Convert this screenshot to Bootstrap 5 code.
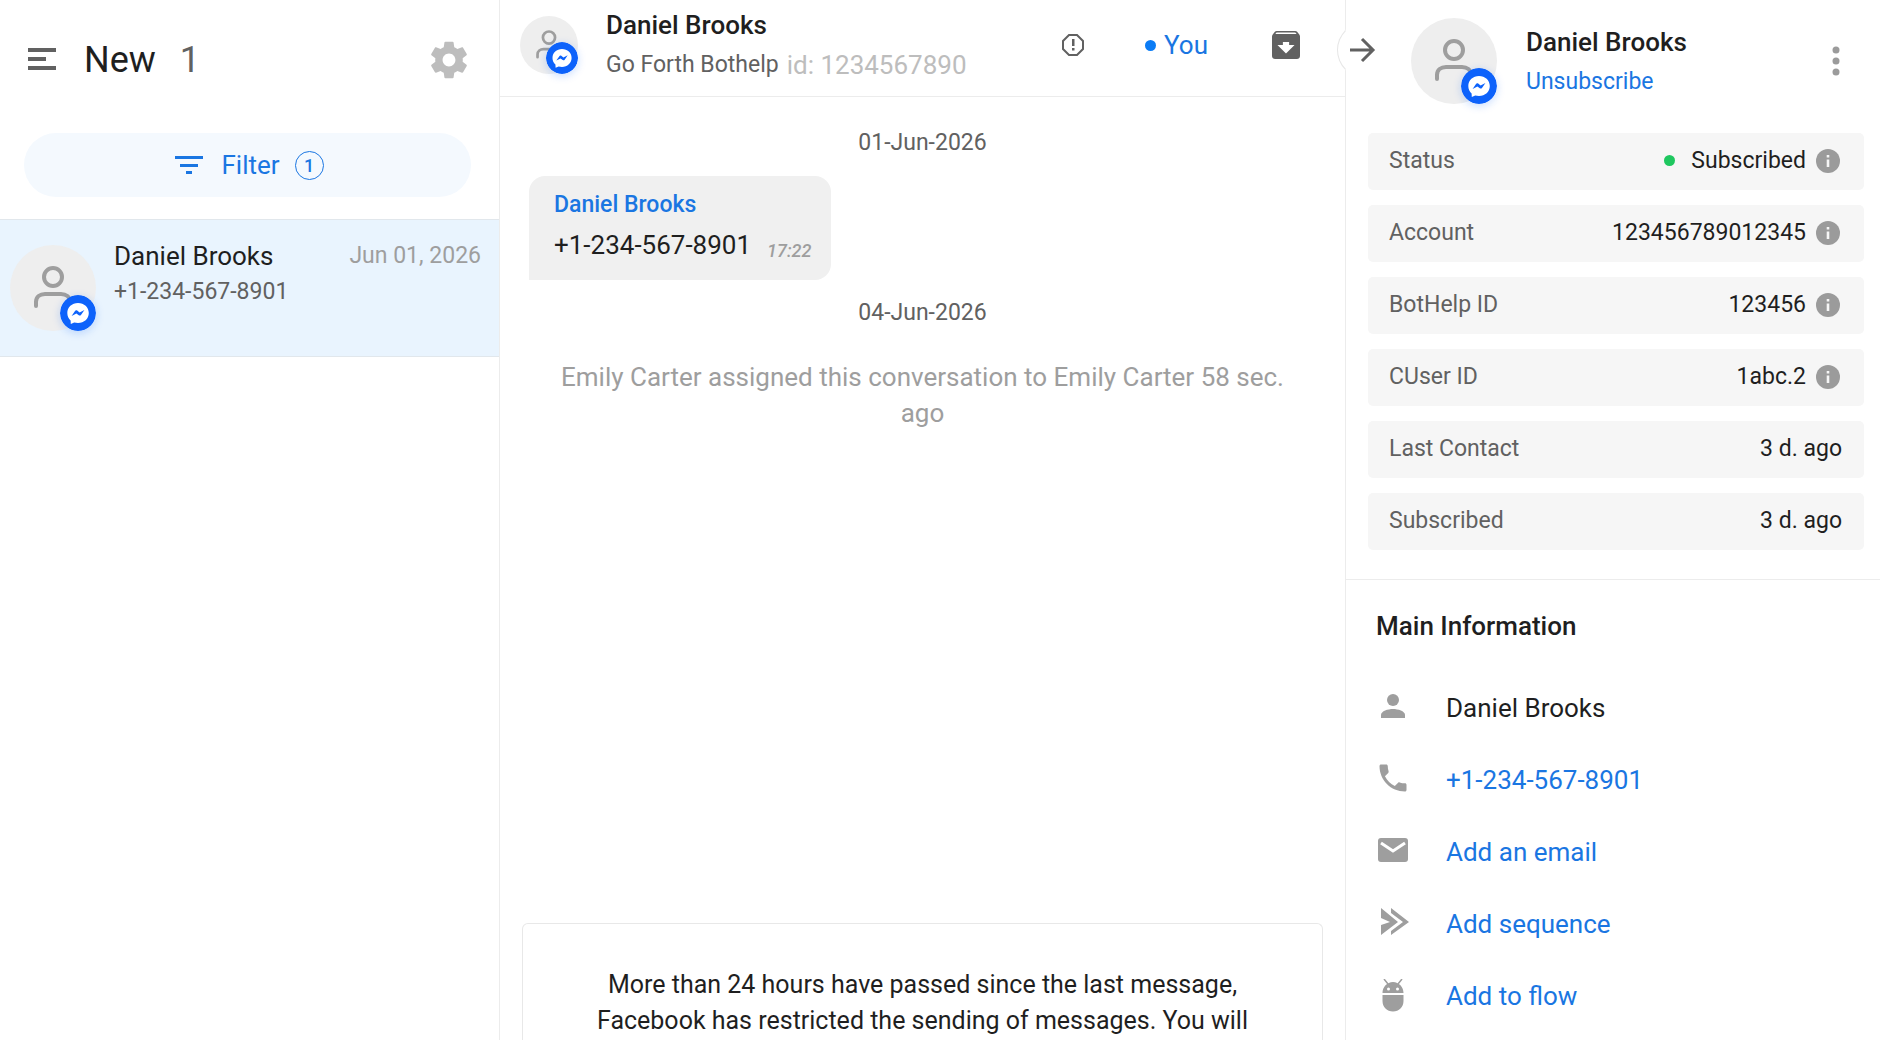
<!DOCTYPE html>
<html lang="en">
<head>
<meta charset="utf-8">
<meta name="viewport" content="width=device-width, initial-scale=1">
<title>Inbox – Daniel Brooks</title>
<link href="https://cdn.jsdelivr.net/npm/bootstrap@5.3.0/dist/css/bootstrap.min.css" rel="stylesheet">
<style>
  :root { --ink:#1f1f1f; --ink-2:#616161; --ink-3:#9e9e9e; --line:#ececec; --blue:#1a76e2; }
  body { font-family: Roboto, "Liberation Sans", sans-serif; font-size: 26px; line-height: 36px; color: var(--ink); background: #fff; }
  a { color: var(--blue); text-decoration: none; }
  .inbox { display: grid; grid-template-columns: 500fr 846fr 534fr; height: 100vh; overflow: hidden; }
  .inbox > * { min-width: 0; }
  .pane-line { border-right: 1px solid var(--line); }
  .btn-plain { background: none; border: 0; padding: 0; color: inherit; display: inline-flex; line-height: inherit; font-size: inherit; }
  .t-sm { font-size: 23px; line-height: 28px; }
  .c-2 { color: var(--ink-2); } .c-3 { color: var(--ink-3); } .c-4 { color: #bdbdbd; } .c-blue { color: var(--blue); }
  .fw-m { font-weight: 500; }
  svg { display: block; flex: none; }

  .face { position: relative; flex: none; width: 86px; height: 86px; border-radius: 50%; background: #eee; }
  .face .person { width: 100%; height: 100%; }
  .face .msgr { position: absolute; right: 0; bottom: 0; width: 36px; height: 36px; border-radius: 50%; box-shadow: 0 2px 8px rgba(13,98,251,.22); }
  .face-sm { width: 58px; height: 58px; }
  .face-sm .msgr { width: 32px; height: 32px; }
  .dot { width: 11px; height: 11px; border-radius: 50%; background: #0b7cf5; }
  .dot-on { background: #1fc75f; }

  .side-head { height: 120px; padding: 0 32px 0 28px; }
  .side-title { font-size: 36px; line-height: 44px; font-weight: 400; }
  .filter-btn { height: 64px; margin: 13px 28px 22px 24px; padding: 0 0 0 4px; border-radius: 32px; background: #f4f9fe; color: var(--blue); border: 0; }
  .filter-btn .label-text { margin: 0 15px 0 18px; }
  .filter-btn .count { width: 29px; height: 29px; border: 1px solid var(--blue); border-radius: 50%; font-size: 18px; line-height: 27px; font-weight: 500; }
  .chat-row { height: 138px; border-top: 1px solid #e1e7ec; border-bottom: 1px solid #e1e7ec; background: #e9f4fe; padding: 18px 18px 0 10px; color: inherit; gap: 18px; }
  .chat-row .face { margin-top: 7px; }

  .chat-head { height: 97px; border-bottom: 1px solid var(--line); padding: 0 45px 6px 20px; }
  .owner-btn { margin: 0 64px 0 60px; }
  .gap-top { padding-top: 19px; }
  .bubble { background: #f0f0f0; border-radius: 16px 16px 16px 0; padding: 15px 20px 17px 25px; margin-left: 29px; }
  .stamp { font-size: 18px; line-height: 24px; font-style: italic; font-weight: 500; color: var(--ink-3); }
  .notice { height: 117px; margin: 0 22px; padding: 43px 60px 0; border: 1px solid #e8e8e8; border-bottom: 0; border-radius: 6px 6px 0 0; font-size: 25px; }

  .info-pane { position: relative; }
  .fold-btn { position: absolute; left: -9px; top: 22px; width: 56px; height: 56px; border-radius: 50%; background: #fff; border: 1px solid transparent; border-left-color: #e6e6e6; padding: 0 0 0 10px; }
  .who { height: 133px; padding: 18px 34px 0 65px; gap: 29px; }
  .who-text { padding-top: 6px; }
  .facts { padding: 0 16px 29px 22px; gap: 15px; border-bottom: 1px solid var(--line); }
  .facts > div { height: 57px; background: #f6f6f6; border-radius: 5px; padding: 0 22px 2px 21px; }
  .facts dt { font-weight: 400; }
  .more { padding: 28px 30px 0 30px; }
  .more h2 { font-size: 26px; line-height: 36px; }
  .more li { height: 72px; gap: 36px; }
</style>
<script src="https://cdn.jsdelivr.net/npm/bootstrap@5.3.0/dist/js/bootstrap.bundle.min.js" defer></script>
</head>
<body>
<svg width="0" height="0" class="position-absolute" aria-hidden="true">
  <symbol id="person" viewBox="0 0 86 86"><g fill="none" stroke="#9e9e9e" stroke-width="4" stroke-linecap="round"><circle cx="43" cy="32" r="9"/><path d="M26 61v-4c0-5 4-8 9-8h16c5 0 9 3 9 8v4"/></g></symbol>
  <symbol id="msgr" viewBox="0 0 36 36"><circle cx="18" cy="18" r="18" fill="#0d62fb"/><path fill="#fff" d="M18 8C12 8 7.300 12.300 7.300 18c0 3 1.300 5.600 3.300 7.400l.2 3.600 3.400-1.500c1.200.3 2.500.5 3.800.5 6.100 0 10.800-4.300 10.800-10S24.100 8 18 8z"/><path fill="#0d62fb" d="M11.600 20.900l3.400-4.900c.5-.8 1.500-.9 2.200-.4l2.400 1.800 4.800-2.500-3.400 5c-.5.7-1.500.9-2.200.4l-2.400-1.800z"/></symbol>
  <symbol id="info" viewBox="0 0 24 24"><circle cx="12" cy="12" r="12" fill="#9b9b9b"/><path fill="#f6f6f6" d="M10.700 6h2.600v2.600h-2.600zM10.700 10.400h2.600v7.600h-2.600z"/></symbol>
</svg>

<div class="inbox">
  <aside class="pane-line">
    <header class="side-head d-flex align-items-center justify-content-between">
      <div class="d-flex align-items-center">
        <button class="btn-plain" type="button" aria-label="Menu"><svg width="28" height="24" viewBox="0 0 28 24" fill="#616161"><path d="M0 0h28v4H0zM0 9h18v4H0zM0 18h28v4H0z"/></svg></button>
        <h1 class="side-title mb-0 ms-4 ps-1">New</h1>
        <span class="side-title c-2 ms-4">1</span>
      </div>
      <button class="btn-plain" type="button" aria-label="Settings"><svg width="36" height="38" viewBox="2.200 2 19.600 20" fill="#bdbdbd"><path d="M19.430 12.980c.04-.32.070-.64.070-.98s-.03-.66-.07-.98l2.110-1.650c.19-.15.240-.42.120-.64l-2-3.460c-.12-.22-.39-.3-.61-.22l-2.490 1c-.52-.4-1.080-.73-1.690-.98l-.38-2.650C14.460 2.180 14.250 2 14 2h-4c-.25 0-.46.180-.49.420l-.38 2.650c-.61.250-1.170.590-1.690.980l-2.490-1c-.23-.09-.49 0-.61.220l-2 3.460c-.13.220-.07.490.120.640l2.110 1.650c-.04.320-.07.650-.07.980s.030.660.070.980l-2.110 1.650c-.19.150-.24.420-.12.640l2 3.460c.12.220.390.300.610.220l2.490-1c.52.400 1.080.730 1.690.980l.38 2.650c.03.240.240.420.490.420h4c.25 0 .46-.18.490-.42l.38-2.650c.61-.25 1.170-.59 1.690-.98l2.490 1c.23.090.490 0 .610-.22l2-3.460c.12-.22.070-.49-.12-.64l-2.110-1.650zM12 15.500c-1.930 0-3.500-1.570-3.500-3.500s1.570-3.500 3.500-3.500 3.500 1.570 3.500 3.500-1.570 3.500-3.500 3.500z"/></svg></button>
    </header>
    <div class="d-flex">
      <button class="filter-btn flex-grow-1 d-flex align-items-center justify-content-center" type="button">
        <svg width="28" height="20" viewBox="0 0 28 20" fill="#1a76e2"><path d="M0 1h28v3H0zM5 9h18v3H5zM11 16h6v3h-6z"/></svg>
        <span class="label-text">Filter</span>
        <span class="count">1</span>
      </button>
    </div>
    <a href="#chat" class="chat-row d-flex align-items-start">
      <span class="face"><svg class="person"><use href="#person"/></svg><svg class="msgr"><use href="#msgr"/></svg></span>
      <span class="flex-grow-1">
        <span class="d-flex justify-content-between align-items-center"><span>Daniel Brooks</span><span class="t-sm c-3">Jun 01, 2026</span></span>
        <span class="d-block t-sm c-2 pt-1">+1-234-567-8901</span>
      </span>
    </a>
  </aside>

  <main class="d-flex flex-column pane-line" id="chat">
    <header class="chat-head d-flex align-items-center">
      <span class="face face-sm"><svg class="person"><use href="#person"/></svg><svg class="msgr"><use href="#msgr"/></svg></span>
      <div class="flex-grow-1 ms-4 ps-1">
        <div class="fw-m">Daniel Brooks</div>
        <div class="d-flex align-items-center gap-2 pt-1"><span class="t-sm c-2">Go Forth Bothelp</span><span class="c-4">id: 1234567890</span></div>
      </div>
      <div class="d-flex align-items-center">
        <button class="btn-plain" type="button" aria-label="Report"><svg width="24" height="24" viewBox="0 0 24 24"><path fill="none" stroke="#616161" stroke-width="2" d="M8 2h8l6 6v8l-6 6H8l-6-6V8z"/><path fill="#616161" d="M11 6h2.500v7H11zM11 15h2.500v2.500H11z"/></svg></button>
        <button class="btn-plain owner-btn align-items-center gap-2 c-blue" type="button"><span class="dot"></span><span>You</span></button>
        <button class="btn-plain" type="button" aria-label="Archive"><svg width="28" height="28" viewBox="3 3 18 18" fill="#616161"><path d="M20.540 5.230l-1.390-1.680C18.880 3.210 18.470 3 18 3H6c-.47 0-.88.210-1.160.550L3.460 5.230C3.170 5.570 3 6.020 3 6.500V19c0 1.100.9 2 2 2h14c1.100 0 2-.9 2-2V6.500c0-.48-.17-.93-.46-1.270zM12 17.500L6.500 12H10v-2h4v2h3.500L12 17.500zM5.120 5l.81-1h12l.94 1H5.120z"/></svg></button>
      </div>
    </header>

    <section class="flex-grow-1 overflow-hidden">
      <div class="t-sm c-2 text-center pt-3 mt-3">01-Jun-2026</div>
      <div class="d-flex gap-top">
        <div class="bubble">
          <div class="t-sm fw-m c-blue">Daniel Brooks</div>
          <div class="d-flex align-items-end gap-3 pt-2"><span>+1-234-567-8901</span><span class="stamp">17:22</span></div>
        </div>
      </div>
      <div class="t-sm c-2 text-center gap-top">04-Jun-2026</div>
      <p class="c-3 text-center px-5 pt-3 mt-3 mb-0">Emily Carter assigned this conversation to Emily Carter 58 sec. ago</p>
    </section>

    <div class="notice text-center">More than 24 hours have passed since the last message, Facebook has restricted the sending of messages. You will</div>
  </main>

  <aside class="info-pane">
    <button class="fold-btn" type="button" aria-label="Hide details"><svg width="28" height="28" viewBox="0 0 28 28" fill="none" stroke="#616161" stroke-width="3"><path d="M2 14h22M14 3l11 11-11 11"/></svg></button>
    <header class="who d-flex align-items-start">
      <span class="face"><svg class="person"><use href="#person"/></svg><svg class="msgr"><use href="#msgr"/></svg></span>
      <div class="who-text flex-grow-1">
        <div class="fw-m">Daniel Brooks</div>
        <a href="#unsubscribe" class="t-sm d-block pt-2">Unsubscribe</a>
      </div>
      <button class="btn-plain align-self-start pt-4 mt-1" type="button" aria-label="More"><svg width="20" height="30" viewBox="0 0 20 30" fill="#9b9b9b"><circle cx="10" cy="4" r="3.500"/><circle cx="10" cy="15" r="3.500"/><circle cx="10" cy="26" r="3.500"/></svg></button>
    </header>

    <dl class="facts d-flex flex-column mb-0 t-sm">
      <div class="d-flex align-items-center justify-content-between"><dt class="c-2">Status</dt><dd class="mb-0 d-flex align-items-center"><span class="dot dot-on me-3"></span>Subscribed<svg class="ms-2" width="28" height="24"><use href="#info"/></svg></dd></div>
      <div class="d-flex align-items-center justify-content-between"><dt class="c-2">Account</dt><dd class="mb-0 d-flex align-items-center">123456789012345<svg class="ms-2" width="28" height="24"><use href="#info"/></svg></dd></div>
      <div class="d-flex align-items-center justify-content-between"><dt class="c-2">BotHelp ID</dt><dd class="mb-0 d-flex align-items-center">123456<svg class="ms-2" width="28" height="24"><use href="#info"/></svg></dd></div>
      <div class="d-flex align-items-center justify-content-between"><dt class="c-2">CUser ID</dt><dd class="mb-0 d-flex align-items-center">1abc.2<svg class="ms-2" width="28" height="24"><use href="#info"/></svg></dd></div>
      <div class="d-flex align-items-center justify-content-between"><dt class="c-2">Last Contact</dt><dd class="mb-0">3 d. ago</dd></div>
      <div class="d-flex align-items-center justify-content-between"><dt class="c-2">Subscribed</dt><dd class="mb-0">3 d. ago</dd></div>
    </dl>

    <section class="more">
      <h2 class="fw-m mb-0">Main Information</h2>
      <ul class="list-unstyled mb-0 pt-4 mt-1">
        <li class="d-flex align-items-center"><svg width="34" height="34" viewBox="0 0 34 34" fill="#9e9e9e"><circle cx="17" cy="9" r="6"/><path d="M5 27v-3c0-4 7-6 12-6s12 2 12 6v3z"/></svg><span>Daniel Brooks</span></li>
        <li class="d-flex align-items-center"><svg width="34" height="34" viewBox="0 0 34 34"><path transform="translate(-1 -3) scale(1.500)" fill="#9e9e9e" d="M6.620 10.790c1.440 2.830 3.760 5.140 6.590 6.590l2.200-2.200c.27-.27.670-.36 1.020-.24 1.120.370 2.330.570 3.570.570.550 0 1 .45 1 1V20c0 .55-.45 1-1 1-9.390 0-17-7.610-17-17 0-.55.450-1 1-1h3.500c.55 0 1 .45 1 1 0 1.250.2 2.450.57 3.570.11.350.030.740-.25 1.020l-2.200 2.200z"/></svg><a href="tel:+12345678901">+1-234-567-8901</a></li>
        <li class="d-flex align-items-center"><svg width="34" height="34" viewBox="0 0 34 34"><rect x="2" y="3" width="30" height="24" rx="3" fill="#9e9e9e"/><path d="M5 8l12 8 12-8" fill="none" stroke="#fff" stroke-width="3"/></svg><a href="#email">Add an email</a></li>
        <li class="d-flex align-items-center"><svg width="34" height="34" viewBox="0 0 34 34" fill="#9e9e9e"><path d="M5 1l17 14L5 28v-10l9-3-9-4z"/><path d="M15 1l18 14-18 13v-4l12-9-12-9z"/></svg><a href="#sequence">Add sequence</a></li>
        <li class="d-flex align-items-center"><svg width="34" height="34" viewBox="0 0 34 34"><g fill="#9e9e9e"><path d="M6.500 14c0-6 4.500-11 10.500-11s10.500 5 10.500 11zM6.500 16h21v6c0 6-4.500 10.500-10.500 10.500S6.500 28 6.500 22z"/><path d="M8 0l4 5M26 0l-4 5" stroke="#9e9e9e" stroke-width="1.500"/></g><circle cx="12.500" cy="10" r="1.500" fill="#fff"/><circle cx="21.500" cy="10" r="1.500" fill="#fff"/></svg><a href="#flow">Add to flow</a></li>
      </ul>
    </section>
  </aside>
</div>
</body>
</html>
